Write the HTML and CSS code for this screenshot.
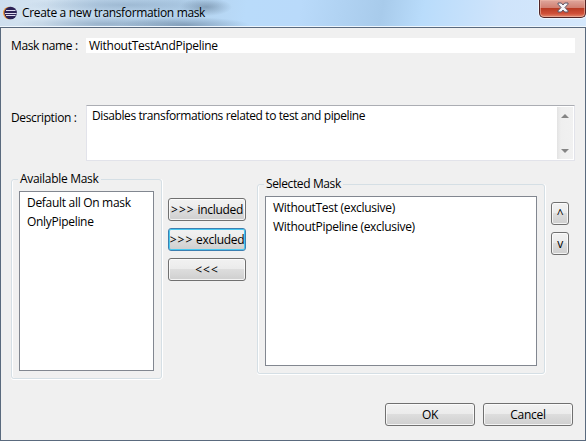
FILE: index.html
```html
<!DOCTYPE html>
<html lang="en">
<head>
<meta charset="utf-8">
<title>Create a new transformation mask</title>
<link rel="stylesheet" href="styles.css">
</head>
<body>
<div class="window">
  <header class="titlebar">
    <svg class="logo" width="14" height="14" viewBox="0 0 14 14">
      <circle cx="6.3" cy="7" r="6.3" fill="#f39a3b"/>
      <circle cx="7.6" cy="7" r="6.3" fill="#2c2255"/>
      <path d="M3 4.500h9.500M2 7.500h11.500M3 9.500h9.500" stroke="#dcd9ec" stroke-width="1"/>
    </svg>
    <h1 class="title">Create a new transformation mask</h1>
    <button class="close" aria-label="Close">
      <svg width="12" height="11" viewBox="0 0 12 11">
        <path d="M1 1h3.3L6 3l1.700-2H11v1.200L8 5.500l3 3.300V10H7.700L6 8l-1.700 2H1V8.800l3-3.300-3-3.300z" fill="#f5f5f8" stroke="#5c5767"/>
      </svg>
    </button>
  </header>
  <main class="content">
    <div class="row name-row">
      <label class="label">Mask name :</label>
      <div class="input">WithoutTestAndPipeline</div>
    </div>
    <div class="row desc-row">
      <label class="label">Description :</label>
      <div class="textarea">
        <span class="desc-text">Disables transformations related to test and pipeline</span>
        <div class="scrollbar">
          <svg width="8" height="4" viewBox="0 0 8 4"><path d="M0 4L4 0l4 4z" fill="#858585"/></svg>
          <svg width="8" height="4" viewBox="0 0 8 4"><path d="M0 0h8L4 4z" fill="#858585"/></svg>
        </div>
      </div>
    </div>
    <div class="masks">
      <fieldset class="group available">
        <legend>Available Mask</legend>
        <ul class="list">
          <li>Default all On mask</li>
          <li>OnlyPipeline</li>
        </ul>
      </fieldset>
      <div class="transfer">
        <button class="btn"><span class="arrows">&gt;&gt;&gt;</span>&nbsp;included</button>
        <button class="btn focused"><span class="arrows">&gt;&gt;&gt;</span>&nbsp;excluded</button>
        <button class="btn"><span class="arrows">&lt;&lt;&lt;</span></button>
      </div>
      <fieldset class="group selected">
        <legend>Selected Mask</legend>
        <ul class="list">
          <li>WithoutTest (exclusive)</li>
          <li>WithoutPipeline (exclusive)</li>
        </ul>
      </fieldset>
      <div class="order">
        <button class="btn">^</button>
        <button class="btn">v</button>
      </div>
    </div>
    <footer class="actions">
      <button class="btn">OK</button>
      <button class="btn">Cancel</button>
    </footer>
  </main>
</div>
</body>
</html>
```

FILE: styles.css
```css
* { box-sizing: border-box; }
body {
  margin: 0;
  overflow: hidden;
  font: 12px/16px "Open Sans", "Noto Sans", sans-serif;
  letter-spacing: -0.3px;
  color: #000;
}
button { font: inherit; letter-spacing: inherit; color: inherit; padding: 0; margin: 0; }
.window { width: 586px; height: 441px; display: flex; flex-direction: column; }

.titlebar {
  height: 27px;
  flex: none;
  display: flex;
  align-items: flex-start;
  border-bottom: 1px solid #eef6fd;
  background:
    radial-gradient(ellipse 26px 9px at 206px 7px, #6f89a2aa 0, #6f89a200 100%),
    radial-gradient(ellipse 65px 8px at 185px 25px, #65809c99 0, #65809c00 100%),
    radial-gradient(ellipse 90px 7px at 105px 24px, #65809c66 0, #65809c00 100%),
    radial-gradient(ellipse 100px 8px at 125px 5px, #7f9cb877 0, #7f9cb800 100%),
    linear-gradient(100deg, #cfdfee 0, #d3e3f1 8%, #bdd5eb 17%, #b3d0ea 30%, #b9dbfa 42%, #b9dafa 51%, #a8cbeb 65%, #b9dcfb 72%, #cfe4fb 85%, #d5e8fc 100%);
}
.logo { margin: 6px 5px 0 3px; flex: none; }
.title { margin: 5px 0 0; font: inherit; white-space: nowrap; letter-spacing: -0.34px; }
.close {
  width: 47px;
  height: 18px;
  margin-left: auto;
  display: flex;
  justify-content: center;
  align-items: flex-start;
  padding-top: 2px;
  border: 1px solid #512426;
  border-top: 0;
  border-radius: 0 0 5px 5px;
  background: linear-gradient(#dfa79d 0, #d18072 45%, #b93c25 50%, #cf5039 80%, #e28a70 100%);
  box-shadow: inset 0 0 0 1px #efb9aa99, 0 0 0 1px #ffffff99;
}

.content {
  flex: 1;
  display: flex;
  flex-direction: column;
  padding: 10px 0 0 10px;
  border: 1px solid #5a6a7e;
  background: #f0f0f0;
}
.row { display: flex; }
.label { width: 75px; flex: none; white-space: nowrap; letter-spacing: -0.37px; }
.name-row { height: 67px; }
.input { width: 489px; height: 15px; line-height: 15px; padding-left: 3px; background: #fff; letter-spacing: -0.27px; }
.desc-row { height: 73px; }
.desc-row .label { padding-top: 5px; }
.textarea {
  width: 489px;
  height: 56px;
  display: flex;
  justify-content: space-between;
  padding: 1px 1px 1px 5px;
  border: 1px solid #e2e3ea;
  border-top-color: #abadb3;
  background: #fff;
}
.desc-text { padding-top: 1px; white-space: nowrap; letter-spacing: -0.4px; }
.scrollbar {
  width: 16px;
  display: flex;
  flex-direction: column;
  align-items: center;
  justify-content: space-between;
  padding: 7px 0 6px;
  background: linear-gradient(90deg, #e3e3e3, #efefef 25%, #f1f1f1);
}

.masks { display: flex; align-items: flex-start; height: 225px; }
.group {
  min-width: 0;
  margin: 0;
  padding: 0 7px;
  border: 1px solid #d5dfe5;
  border-radius: 3px;
  box-shadow: inset 1px 0 #fff, 1px 0 #fff, 0 1px #fff;
}
.group legend { height: 16px; margin-left: -1px; padding: 0 2px; white-space: nowrap; }
.available { width: 151px; height: 208px; margin-top: -7px; }
.selected { width: 288px; height: 198px; margin: -2px 0 0 11px; }
.selected legend { letter-spacing: -0.38px; }
.list { margin: 4px 0 0; padding: 2px 7px; list-style: none; border: 1px solid #828790; background: #fff; }
.available .list { height: 180px; }
.selected .list { height: 170px; }
.list li { height: 19px; line-height: 17px; white-space: nowrap; }

.transfer { display: flex; flex-direction: column; gap: 7px; margin: 20px 0 0 6px; }
.btn {
  display: flex;
  align-items: center;
  justify-content: center;
  height: 23px;
  border: 1px solid #707070;
  border-radius: 3px;
  background: linear-gradient(#f2f2f2 0, #ebebeb 49%, #dddddd 50%, #cfcfcf 100%);
  box-shadow: inset 0 0 0 1px #fcfcfccc;
  white-space: nowrap;
}
.arrows { letter-spacing: 1px; }
.transfer .btn { width: 78px; }
.btn.focused { border-color: #3c7fb1; box-shadow: inset 0 0 0 1px #48c8f0; }
.order { display: flex; flex-direction: column; gap: 7px; margin: 24px 0 0 6px; }
.order .btn { width: 18px; }
.actions { display: flex; gap: 8px; padding-left: 374px; }
.actions .btn { width: 90px; }
```
